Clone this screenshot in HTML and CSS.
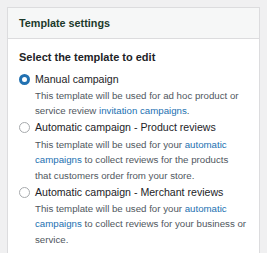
FILE: index.html
```html
<!DOCTYPE html>
<html>
<head>
<meta charset="utf-8">
<link rel="stylesheet" href="styles.css">
</head>
<body>
<div class="card">
  <div class="card-header">Template settings</div>
  <div class="card-body">
    <div class="section-title">Select the template to edit</div>
    <div class="option">
      <span class="radio checked"></span>
      <div class="option-text">
        <div class="option-label">Manual campaign</div>
        <div class="option-desc">This template will be used for ad hoc product or service review <a href="#">invitation campaigns</a>.</div>
      </div>
    </div>
    <div class="option">
      <span class="radio"></span>
      <div class="option-text">
        <div class="option-label">Automatic campaign - Product reviews</div>
        <div class="option-desc">This template will be used for your <a href="#">automatic campaigns</a> to collect reviews for the products<br>that customers order from your store.</div>
      </div>
    </div>
    <div class="option">
      <span class="radio"></span>
      <div class="option-text">
        <div class="option-label">Automatic campaign - Merchant reviews</div>
        <div class="option-desc">This template will be used for your <a href="#">automatic campaigns</a> to collect reviews for your business or service.</div>
      </div>
    </div>
  </div>
</div>
</body>
</html>
```
FILE: styles.css
```css
html, body {
  margin: 0;
  padding: 0;
  background: #f0f0f1;
  font-family: "Liberation Sans", Arial, sans-serif;
  color: #1d2327;
}
body {
  padding: 7px 7px 0 7px;
  height: 253px;
  box-sizing: border-box;
  overflow: hidden;
}
.card {
  width: 253px;
  box-sizing: border-box;
  background: #fff;
  border: 1px solid #dcdcde;
  height: 260px;
}
.card-header {
  background: #f6f7f7;
  border-bottom: 1px solid #dcdcde;
  height: 30px;
  padding: 0 11px;
  display: flex;
  align-items: center;
  font-size: 10.8px;
  font-weight: 700;
  color: #1c3a2b;
}
.card-body {
  padding: 10.5px 10.5px 0 11px;
}
.section-title {
  font-size: 11px;
  font-weight: 700;
  line-height: 15px;
  margin-bottom: 7px;
  color: #1d2327;
}
.option {
  display: flex;
  gap: 5px;
  margin-bottom: 1.5px;
}
.radio {
  flex: none;
  width: 11px;
  height: 11px;
  border: 1px solid #a7aaad;
  border-radius: 50%;
  box-sizing: border-box;
  margin-top: 2px;
  background: #fff;
}
.radio.checked {
  border: 3.5px solid #2271b1;
}
.option-label {
  font-size: 10.6px;
  line-height: 15px;
  margin-bottom: 1.5px;
  color: #1d2327;
}
.option-desc {
  font-size: 9.7px;
  line-height: 15.4px;
  color: #50575e;
}
.option-desc a {
  color: #2271b1;
  text-decoration: none;
}
```
